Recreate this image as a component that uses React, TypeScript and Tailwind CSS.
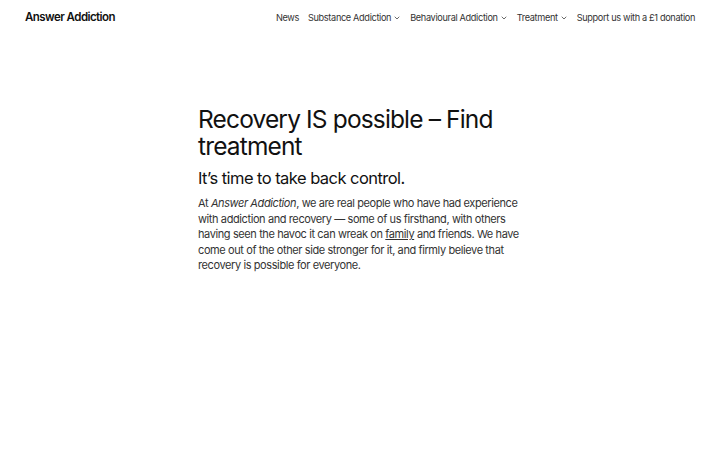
import { ChevronDown } from "lucide-react";

const font = { fontFamily: "Inter, 'Noto Sans', sans-serif" };

function NavItem({ label, menu }: { label: string; menu?: boolean }) {
  return (
    <a href="#" className="flex items-center gap-[2px] text-[#333]">
      {label}
      {menu ? <ChevronDown className="h-[8px] w-[8px]" strokeWidth={2.2} /> : null}
    </a>
  );
}

export default function App() {
  return (
    <div className="min-h-[450px] bg-white text-[#111]" style={font}>
      <header className="flex h-[36px] items-center justify-between px-[25px]">
        <a href="#" className="text-[11.5px] font-semibold tracking-[-0.55px] text-[#111]">
          Answer Addiction
        </a>
        <nav className="flex items-center gap-[9px] text-[9.2px] tracking-[-0.35px]">
          <NavItem label="News" />
          <NavItem label="Substance Addiction" menu />
          <NavItem label="Behavioural Addiction" menu />
          <NavItem label="Treatment" menu />
          <NavItem label="Support us with a £1 donation" />
        </nav>
      </header>
      <main className="mx-auto w-[324px] pt-[70px]">
        <h1 className="text-[24.5px] font-normal leading-[27px] tracking-[-0.85px] text-[#111]">
          Recovery IS possible – Find treatment
        </h1>
        <p className="mt-[7px] text-[16.5px] leading-[22px] tracking-[-0.55px] text-[#111]">
          It’s time to take back control.
        </p>
        <p className="mt-[7px] text-[11px] leading-[15.6px] tracking-[-0.4px] text-[#333]">
          At <em>Answer Addiction</em>, we are real people who have had experience with addiction and
          recovery — some of us firsthand, with others having seen the havoc it can wreak on{" "}
          <a href="#" className="underline">
            family
          </a>{" "}
          and friends. We have come out of the other side stronger for it, and firmly believe that
          recovery is possible for everyone.
        </p>
      </main>
    </div>
  );
}
